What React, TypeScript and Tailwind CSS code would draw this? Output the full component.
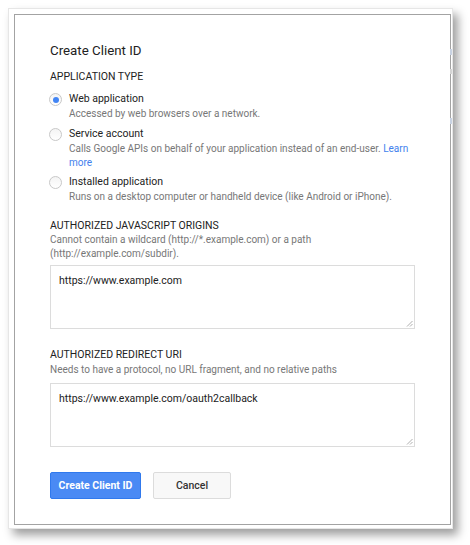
import React from "react";

function Radio({ checked }: { checked?: boolean }) {
  return (
    <span className="mt-[1px] ml-[-1px] flex h-[13px] w-[13px] shrink-0 items-center justify-center rounded-full border border-[#c8c8c8] bg-gradient-to-b from-[#f4f4f4] to-white">
      {checked && <span className="h-[6px] w-[6px] rounded-full bg-[#4285f4]" />}
    </span>
  );
}

function Option({
  checked,
  label,
  children,
}: {
  checked?: boolean;
  label: string;
  children: React.ReactNode;
}) {
  return (
    <div className="flex items-start gap-[7px]">
      <Radio checked={checked} />
      <div className="flex flex-col">
        <div className="text-[10.5px] leading-[14px] text-[#222]">{label}</div>
        <div className="mt-px text-[10px] leading-[14px] text-[#777]">{children}</div>
      </div>
    </div>
  );
}

function TextArea({ value }: { value: string }) {
  return (
    <div className="relative h-[64px] w-full border border-[#dcdcdc] bg-white px-[8px] pt-[8px] text-[10.5px] leading-[14px] text-[#222]">
      {value}
      <svg className="absolute bottom-[1px] right-[1px]" width="7" height="7" viewBox="0 0 7 7">
        <line x1="1" y1="6.5" x2="6.5" y2="1" stroke="#999" strokeWidth="0.8" />
        <line x1="4" y1="6.5" x2="6.5" y2="4" stroke="#999" strokeWidth="0.8" />
      </svg>
    </div>
  );
}

export default function App() {
  return (
    <div className="h-[545px] w-[470px] bg-white pl-[8px] pt-[8px]" style={{ fontFamily: "Roboto, 'Liberation Sans', Arial, sans-serif" }}>
      <div className="relative w-[445px] border border-[#e6e6e6] bg-white pb-[3px] pl-[5px] pr-[1px] pt-[5px] shadow-[5px_6px_9px_rgba(0,0,0,0.38)]">
        <span className="absolute right-0 top-[40px] h-[6px] w-[2px] bg-[#c9d3e3]" />
        <span className="absolute right-0 top-[60px] h-[5px] w-[2px] bg-[#d5d5d5]" />
        <span className="absolute right-0 top-[109px] h-[6px] w-[2px] bg-[#c9d3e3]" />
        <div className="flex h-[511px] w-[437px] flex-col border border-[#a3a3a3] bg-white pl-[35px] pr-[35px] pt-[28px]">
          <h1 className="text-[13.3px] font-normal leading-[16px] text-[#222]">Create Client ID</h1>

          <div className="mt-[11px] text-[10.5px] leading-[14px] text-[#222]">APPLICATION TYPE</div>

          <div className="mt-[8px] flex flex-col gap-[5.5px]">
            <Option checked label="Web application">
              Accessed by web browsers over a network.
            </Option>
            <Option label="Service account">
              Calls Google APIs on behalf of your application instead of an end-user.{" "}
              <a className="text-[#427fed]">Learn</a> <a className="text-[#427fed]">more</a>
            </Option>
            <Option label="Installed application">
              Runs on a desktop computer or handheld device (like Android or iPhone).
            </Option>
          </div>

          <div className="mt-[15px] text-[10.5px] leading-[14px] text-[#222]">AUTHORIZED JAVASCRIPT ORIGINS</div>
          <div className="text-[10px] leading-[14px] text-[#777]">
            Cannot contain a wildcard (http://*.example.com) or a path (http://example.com/subdir).
          </div>
          <div className="mt-[4px]">
            <TextArea value="https://www.example.com" />
          </div>

          <div className="mt-[19px] text-[10.5px] leading-[14px] text-[#222]">AUTHORIZED REDIRECT URI</div>
          <div className="mt-px text-[10px] leading-[14px] text-[#777]">
            Needs to have a protocol, no URL fragment, and no relative paths
          </div>
          <div className="mt-[6px]">
            <TextArea value="https://www.example.com/oauth2callback" />
          </div>

          <div className="mt-[25px] flex gap-[12px]">
            <button className="h-[27px] w-[91px] rounded-[2px] border border-[#3079ed] bg-[#4a8af4] text-[10.5px] font-bold text-white">
              Create Client ID
            </button>
            <button className="h-[27px] w-[78px] rounded-[2px] border border-[#dcdcdc] bg-[#f8f8f8] text-[10.5px] font-medium text-[#333]">
              Cancel
            </button>
          </div>
        </div>
      </div>
    </div>
  );
}
